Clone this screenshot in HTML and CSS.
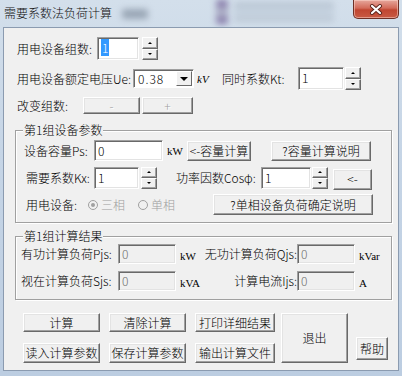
FILE: index.html
```html
<!DOCTYPE html>
<html lang="zh-CN">
<head>
  <meta charset="UTF-8" />
  <title>需要系数法负荷计算</title>
  <link rel="stylesheet" href="styles.css">
</head>
<body>
  <div class="window">
    <div class="titlebar">
      <span class="title">需要系数法负荷计算</span>
      <span class="haze haze-a"></span>
      <span class="haze haze-b"></span>
      <span class="haze haze-c"></span>
      <span class="close">
        <svg width="14" height="11" viewBox="0 0 14 11">
          <path d="M3 2 L11 9 M11 2 L3 9" stroke="#5a241b" stroke-width="4" stroke-linecap="round"/>
          <path d="M3 2 L11 9 M11 2 L3 9" stroke="#fff" stroke-width="2.2" stroke-linecap="round"/>
        </svg>
      </span>
    </div>

    <div class="client">
      <div class="row row-count">
        <span class="lbl lbl-count">用电设备组数:</span>
        <span class="edit edit-count"><span class="picked">1</span></span>
        <span class="spin"><i class="up"></i><i class="down"></i></span>
      </div>

      <div class="row row-volt">
        <span class="lbl lbl-volt">用电设备额定电压Ue:</span>
        <span class="combo"><span class="combo-val">0.38</span><span class="drop"><b></b></span></span>
        <span class="unit unit-kv">kV</span>
        <span class="lbl lbl-kt">同时系数Kt:</span>
        <span class="edit edit-kt">1</span>
        <span class="spin spin-kt"><i class="up"></i><i class="down"></i></span>
      </div>

      <div class="row row-change">
        <span class="lbl lbl-change">改变组数:</span>
        <span class="btn off btn-minus">-</span>
        <span class="btn off btn-plus">+</span>
      </div>

      <div class="group group-params">
        <span class="gtitle">第1组设备参数</span>
        <div class="row row-ps">
          <span class="lbl lbl-ps">设备容量Ps:</span>
          <span class="edit edit-ps">0</span>
          <span class="unit unit-kw">kW</span>
          <span class="btn btn-calc">&lt;-容量计算</span>
          <span class="btn btn-help1">?容量计算说明</span>
        </div>
        <div class="row row-kx">
          <span class="lbl lbl-kx">需要系数Kx:</span>
          <span class="edit edit-kx">1</span>
          <span class="spin spin-kx"><i class="up"></i><i class="down"></i></span>
          <span class="lbl lbl-cos">功率因数Cosφ:</span>
          <span class="edit edit-cos">1</span>
          <span class="spin spin-cos"><i class="up"></i><i class="down"></i></span>
          <span class="btn btn-back">&lt;-</span>
        </div>
        <div class="row row-phase">
          <span class="lbl lbl-phase">用电设备:</span>
          <span class="radio checked"></span>
          <span class="radio-text">三相</span>
          <span class="radio radio-second"></span>
          <span class="radio-text">单相</span>
          <span class="btn btn-help2">?单相设备负荷确定说明</span>
        </div>
      </div>

      <div class="group group-result">
        <span class="gtitle">第1组计算结果</span>
        <div class="row row-res1">
          <span class="lbl lbl-res">有功计算负荷Pjs:</span>
          <span class="edit ro">0</span>
          <span class="unit unit-res">kW</span>
          <span class="lbl lbl-res-r">无功计算负荷Qjs:</span>
          <span class="edit ro">0</span>
          <span class="unit unit-res-r">kVar</span>
        </div>
        <div class="row row-res2">
          <span class="lbl lbl-res">视在计算负荷Sjs:</span>
          <span class="edit ro">0</span>
          <span class="unit unit-res">kVA</span>
          <span class="lbl lbl-res-r">计算电流Ijs:</span>
          <span class="edit ro">0</span>
          <span class="unit unit-res-r">A</span>
        </div>
      </div>

      <div class="actions">
        <div class="action-grid">
          <span class="btn">计算</span>
          <span class="btn">清除计算</span>
          <span class="btn">打印详细结果</span>
          <span class="btn">读入计算参数</span>
          <span class="btn">保存计算参数</span>
          <span class="btn">输出计算文件</span>
        </div>
        <span class="btn btn-exit">退出</span>
        <span class="btn btn-helpme">帮助</span>
      </div>
    </div>
  </div>
</body>
</html>
```

FILE: styles.css
```css
* {
  box-sizing: border-box;
}

body {
  margin: 0;
  width: 402px;
  height: 376px;
  overflow: hidden;
  font-family: "Noto Sans CJK SC", sans-serif;
  font-size: 12px;
  font-weight: 300;
  line-height: 16px;
  color: #000;
  background: #c8d6e6;
}

.window {
  height: 376px;
  display: flex;
  flex-direction: column;
  background: linear-gradient(180deg, #d3dfeb 0%, #c6d5e6 40%, #bccde1 100%);
}

/* title bar */
.titlebar {
  height: 27px;
  display: flex;
  align-items: flex-start;
  overflow: hidden;
}

.title {
  padding: 5px 0 0 4px;
  color: #111;
  white-space: nowrap;
}

.haze {
  display: block;
  filter: blur(3px);
  border-radius: 3px;
}

.haze-a {
  width: 26px;
  height: 10px;
  margin: 9px 0 0 10px;
  background: #9aa7b6;
}

.haze-b {
  width: 12px;
  height: 24px;
  margin: 0 0 0 68px;
  background: linear-gradient(180deg, #7b6aa0 0%, #b3b8cc 50%, #7b6aa0 100%);
}

.haze-c {
  width: 100px;
  height: 20px;
  margin: 2px 0 0 6px;
  background: linear-gradient(180deg, #aab6c4 0%, #c4d1df 50%, #b2bdca 100%);
  opacity: 0.7;
}

.close {
  margin-left: auto;
  margin-right: 3px;
  width: 46px;
  height: 19px;
  display: flex;
  align-items: center;
  justify-content: center;
  border: 1px solid #6e3026;
  border-top: none;
  border-radius: 0 0 5px 5px;
  background: linear-gradient(180deg, #e6a79c 0%, #d36b5a 45%, #c04631 55%, #c85a44 100%);
  box-shadow: inset 0 0 0 1px rgba(255, 220, 210, 0.5);
}

/* client area */
.client {
  flex: 1;
  margin: 0 3px 5px 3px;
  border: 1px solid #8b9bb0;
  background: #f0f0f0;
  padding: 9px 0 0 13px;
  display: flex;
  flex-direction: column;
}

.row {
  display: flex;
  align-items: center;
}

.lbl {
  white-space: nowrap;
}

.unit {
  font-family: "Liberation Serif", serif;
  font-size: 11px;
  white-space: nowrap;
}

/* sunken edit box */
.edit {
  height: 23px;
  background: #fff;
  border: 1px solid;
  border-color: #a0a0a0 #fff #fff #a0a0a0;
  box-shadow: inset 1px 1px #696969, inset -1px -1px #e3e3e3;
  padding: 2px 3px;
  align-self: center;
}

.edit.ro {
  background: #f0f0f0;
  width: 58px;
  height: 20px;
  padding: 1px 3px;
  color: #6d6d6d;
}

.picked {
  background: #3399ff;
  color: #fff;
  padding: 0 1px;
}

/* spinner */
.spin {
  width: 16px;
  height: 23px;
  margin-left: 3px;
  display: flex;
  flex-direction: column;
}

.spin i {
  flex: 1;
  display: flex;
  align-items: center;
  justify-content: center;
  background: #f0f0f0;
  border: 1px solid;
  border-color: #fff #696969 #696969 #fff;
  box-shadow: inset -1px -1px #a0a0a0;
}

.spin i::after {
  content: "";
  border-left: 2px solid transparent;
  border-right: 2px solid transparent;
}

.spin .up::after {
  border-bottom: 2px solid #000;
}

.spin .down::after {
  border-top: 2px solid #000;
}

/* raised button */
.btn {
  height: 20px;
  display: flex;
  align-items: center;
  justify-content: center;
  white-space: nowrap;
  background: #f0f0f0;
  border: 1px solid;
  border-color: #fff #696969 #696969 #fff;
  box-shadow: inset -1px -1px #a0a0a0, inset 1px 1px #e3e3e3;
}

.btn.off {
  color: #a0a0a0;
  text-shadow: 1px 1px #fff;
  height: 17px;
}

/* first rows */
.row-count {
  height: 23px;
}

.lbl-count {
  width: 80px;
}

.edit-count {
  width: 42px;
}

.row-volt {
  height: 23px;
  margin-top: 7px;
}

.lbl-volt {
  width: 116px;
}

.combo {
  width: 61px;
  height: 19px;
  display: flex;
  background: #fff;
  border: 1px solid;
  border-color: #a0a0a0 #fff #fff #a0a0a0;
  box-shadow: inset 1px 1px #696969;
}

.combo-val {
  flex: 1;
  padding: 1px 0 0 4px;
  line-height: 15px;
  letter-spacing: 1px;
}

.drop {
  width: 16px;
  margin: 1px 1px 1px 0;
  display: flex;
  align-items: center;
  justify-content: center;
  background: #f0f0f0;
  border: 1px solid;
  border-color: #fff #696969 #696969 #fff;
}

.drop b {
  border-left: 4px solid transparent;
  border-right: 4px solid transparent;
  border-top: 4px solid #000;
}

.unit-kv {
  margin-left: 3px;
  width: 14px;
  font-style: italic;
}

.lbl-kt {
  margin-left: 11px;
  width: 76px;
}

.edit-kt {
  width: 46px;
}

.spin-kt {
  margin-left: 1px;
}

.row-change {
  height: 17px;
  margin-top: 7px;
}

.lbl-change {
  width: 66px;
}

.btn-minus {
  width: 57px;
}

.btn-plus {
  width: 51px;
  margin-left: 2px;
}

/* group boxes */
.group {
  margin-left: -2px;
  width: 377px;
  border: 1px solid #a0a0a0;
  box-shadow: inset 1px 1px #fff, 1px 1px #fff;
  display: flex;
  flex-direction: column;
}

.gtitle {
  align-self: flex-start;
  margin: -9px 0 0 7px;
  padding: 0 1px;
  background: #f0f0f0;
}

.group-params {
  margin-top: 16px;
  height: 93px;
}

.row-ps {
  height: 23px;
  margin-top: 1px;
  padding-left: 8px;
}

.lbl-ps {
  width: 70px;
}

.edit-ps {
  width: 69px;
  height: 21px;
}

.unit-kw {
  margin-left: 4px;
  width: 20px;
}

.btn-calc {
  width: 64px;
}

.btn-help1 {
  width: 100px;
  margin-left: 20px;
}

.row-kx {
  height: 23px;
  margin-top: 4px;
  padding-left: 10px;
}

.lbl-kx {
  width: 68px;
}

.edit-kx {
  width: 45px;
  height: 22px;
}

.spin-kx {
  margin-left: 2px;
  height: 22px;
}

.lbl-cos {
  margin-left: 19px;
  width: 85px;
}

.edit-cos {
  width: 50px;
  height: 22px;
}

.spin-cos {
  margin-left: 1px;
  height: 22px;
}

.btn-back {
  width: 39px;
  height: 21px;
  margin-left: 5px;
  margin-top: 3px;
}

.row-phase {
  height: 21px;
  margin-top: 5px;
  padding-left: 10px;
}

.lbl-phase {
  width: 62px;
}

.radio {
  width: 10px;
  height: 10px;
  border-radius: 50%;
  border: 1px solid #a0a0a0;
  background: #f0f0f0;
  display: flex;
  align-items: center;
  justify-content: center;
}

.radio.checked::after {
  content: "";
  width: 4px;
  height: 4px;
  border-radius: 50%;
  background: #a0a0a0;
}

.radio-second {
  margin-left: 13px;
}

.radio-text {
  margin-left: 3px;
  color: #a0a0a0;
}

.btn-help2 {
  width: 160px;
  height: 21px;
  margin-left: 38px;
}

.group-result {
  margin-top: 13px;
  height: 64px;
}

.row-res1 {
  height: 21px;
  margin-top: -1px;
  padding-left: 5px;
}

.row-res2 {
  height: 20px;
  margin-top: 7px;
  padding-left: 5px;
}

.lbl-res {
  width: 97px;
}

.unit-res {
  width: 25px;
  padding-left: 4px;
  align-self: flex-end;
}

.lbl-res-r {
  width: 96px;
  text-align: right;
}

.unit-res-r {
  padding-left: 4px;
  align-self: flex-end;
}

/* bottom buttons */
.actions {
  margin-top: 13px;
  margin-left: 6px;
  display: flex;
  align-items: flex-start;
}

.action-grid {
  display: grid;
  grid-template-columns: 77px 77px 80px;
  grid-template-rows: 19px 20px;
  column-gap: 9px;
  row-gap: 11px;
}

.action-grid .btn {
  height: auto;
}

.btn-exit {
  width: 67px;
  height: 50px;
  margin-left: 6px;
}

.btn-helpme {
  width: 32px;
  height: 23px;
  margin-left: 8px;
  margin-top: 24px;
}
```
